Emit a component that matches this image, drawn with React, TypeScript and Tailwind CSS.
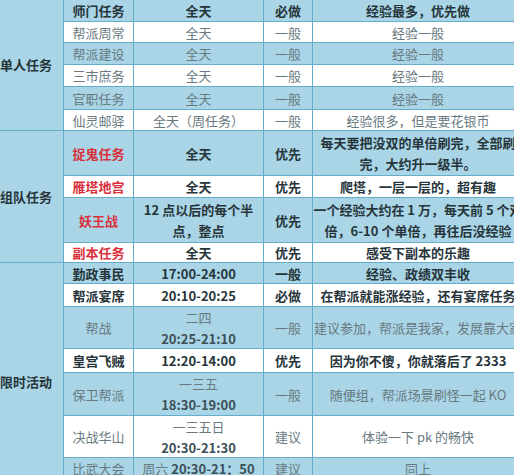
import React from "react";

type Tone = "bold" | "plain" | "red";

type Row = {
  h: string;
  bg: "blue" | "white";
  name: string;
  nameTone: Tone;
  time: React.ReactNode;
  timeTone: Tone;
  level: string;
  levelTone: Tone;
  note: React.ReactNode;
  noteTone: Tone;
};

type Group = { label: string; span: string; rows: Row[] };

const GROUPS: Group[] = [
  {
    label: "单人任务",
    span: "row-span-6",
    rows: [
      { h: "h-[21px]", bg: "blue", name: "师门任务", nameTone: "bold", time: "全天", timeTone: "bold", level: "必做", levelTone: "bold", note: "经验最多，优先做", noteTone: "bold" },
      { h: "h-[20px]", bg: "white", name: "帮派周常", nameTone: "plain", time: "全天", timeTone: "plain", level: "一般", levelTone: "plain", note: "经验一般", noteTone: "plain" },
      { h: "h-[21px]", bg: "blue", name: "帮派建设", nameTone: "plain", time: "全天", timeTone: "plain", level: "一般", levelTone: "plain", note: "经验一般", noteTone: "plain" },
      { h: "h-[21px]", bg: "white", name: "三市庶务", nameTone: "plain", time: "全天", timeTone: "plain", level: "一般", levelTone: "plain", note: "经验一般", noteTone: "plain" },
      { h: "h-[22px]", bg: "blue", name: "官职任务", nameTone: "plain", time: "全天", timeTone: "plain", level: "一般", levelTone: "plain", note: "经验一般", noteTone: "plain" },
      { h: "h-[20px]", bg: "white", name: "仙灵邮驿", nameTone: "plain", time: "全天（周任务）", timeTone: "plain", level: "一般", levelTone: "plain", note: "经验很多，但是要花银币", noteTone: "plain" },
    ],
  },
  {
    label: "组队任务",
    span: "row-span-4",
    rows: [
      {
        h: "h-[44px]", bg: "blue", name: "捉鬼任务", nameTone: "red", time: "全天", timeTone: "bold", level: "优先", levelTone: "bold",
        note: (<>每天要把没双的单倍刷完，全部刷<br />完，大约升一级半。</>), noteTone: "bold",
      },
      { h: "h-[21px]", bg: "white", name: "雁塔地宫", nameTone: "red", time: "全天", timeTone: "bold", level: "优先", levelTone: "bold", note: "爬塔，一层一层的，超有趣", noteTone: "bold" },
      {
        h: "h-[44px]", bg: "blue", name: "妖王战", nameTone: "red",
        time: (<>12 点以后的每个半<br />点，整点</>), timeTone: "bold", level: "优先", levelTone: "bold",
        note: (<>一个经验大约在 1 万，每天前 5 个双<br />倍，6-10 个单倍，再往后没经验</>), noteTone: "bold",
      },
      { h: "h-[19px]", bg: "white", name: "副本任务", nameTone: "red", time: "全天", timeTone: "bold", level: "优先", levelTone: "bold", note: "感受下副本的乐趣", noteTone: "bold" },
    ],
  },
  {
    label: "限时活动",
    span: "row-span-8",
    rows: [
      { h: "h-[20px]", bg: "blue", name: "勤政事民", nameTone: "bold", time: "17:00-24:00", timeTone: "bold", level: "一般", levelTone: "bold", note: "经验、政绩双丰收", noteTone: "bold" },
      { h: "h-[22px]", bg: "white", name: "帮派宴席", nameTone: "bold", time: "20:10-20:25", timeTone: "bold", level: "必做", levelTone: "bold", note: "在帮派就能涨经验，还有宴席任务", noteTone: "bold" },
      {
        h: "h-[41px]", bg: "blue", name: "帮战", nameTone: "plain",
        time: (<>二四<br /><b className="font-semibold text-[#3d5058]">20:25-21:10</b></>), timeTone: "plain", level: "一般", levelTone: "plain",
        note: "建议参加，帮派是我家，发展靠大家", noteTone: "plain",
      },
      { h: "h-[23px]", bg: "white", name: "皇宫飞贼", nameTone: "bold", time: "12:20-14:00", timeTone: "bold", level: "优先", levelTone: "bold", note: "因为你不傻，你就落后了 2333", noteTone: "bold" },
      {
        h: "h-[42px]", bg: "blue", name: "保卫帮派", nameTone: "plain",
        time: (<>一三五<br /><b className="font-semibold text-[#3d5058]">18:30-19:00</b></>), timeTone: "plain", level: "一般", levelTone: "plain",
        note: "随便组，帮派场景刷怪一起 KO", noteTone: "plain",
      },
      {
        h: "h-[41px]", bg: "white", name: "决战华山", nameTone: "plain",
        time: (<>一三五日<br /><b className="font-semibold text-[#3d5058]">20:30-21:30</b></>), timeTone: "plain", level: "建议", levelTone: "plain",
        note: "体验一下 pk 的畅快", noteTone: "plain",
      },
      {
        h: "h-[21px]", bg: "blue", name: "比武大会", nameTone: "plain",
        time: (<>周六 <b className="font-semibold text-[#3d5058]">20:30-21：50</b></>), timeTone: "plain", level: "建议", levelTone: "plain",
        note: "同上", noteTone: "plain",
      },
      { h: "h-[21px]", bg: "white", name: "", nameTone: "plain", time: "", timeTone: "plain", level: "", levelTone: "plain", note: "", noteTone: "plain" },
    ],
  },
];

const TONE: Record<Tone, string> = {
  bold: "font-semibold text-[#27353b]",
  plain: "font-normal text-[#68797f]",
  red: "font-semibold text-[#d9303b]",
};

const BG = { blue: "bg-[#a9d5e7]", white: "bg-white" };

function Cell({ row, tone, children, extra = "" }: { row: Row; tone: Tone; children: React.ReactNode; extra?: string }) {
  return (
    <div className={`${row.h} ${BG[row.bg]} ${TONE[tone]} ${extra} flex items-center justify-center text-center whitespace-nowrap leading-[21px]`}>
      <div>{children}</div>
    </div>
  );
}

export default function App() {
  return (
    <div className="w-[514px] h-[475px] overflow-hidden bg-white">
      <div
        className="-ml-[11px] grid grid-cols-[74px_69px_129px_48px_210px] gap-px bg-[#64adcb] w-max text-[13px]"
        style={{ fontFamily: '"Noto Sans CJK SC", "Noto Sans", sans-serif' }}
      >
        {GROUPS.map((g) => (
          <React.Fragment key={g.label}>
            <div className={`${g.span} col-start-1 bg-[#a9d5e7] flex items-center justify-center font-semibold text-[#27353b]`}>
              {g.label}
            </div>
            {g.rows.map((r, i) => (
              <React.Fragment key={g.label + i}>
                <Cell row={r} tone={r.nameTone} extra="col-start-2">{r.name}</Cell>
                <Cell row={r} tone={r.timeTone}>{r.time}</Cell>
                <Cell row={r} tone={r.levelTone}>{r.level}</Cell>
                <Cell row={r} tone={r.noteTone}>{r.note}</Cell>
              </React.Fragment>
            ))}
          </React.Fragment>
        ))}
      </div>
    </div>
  );
}
